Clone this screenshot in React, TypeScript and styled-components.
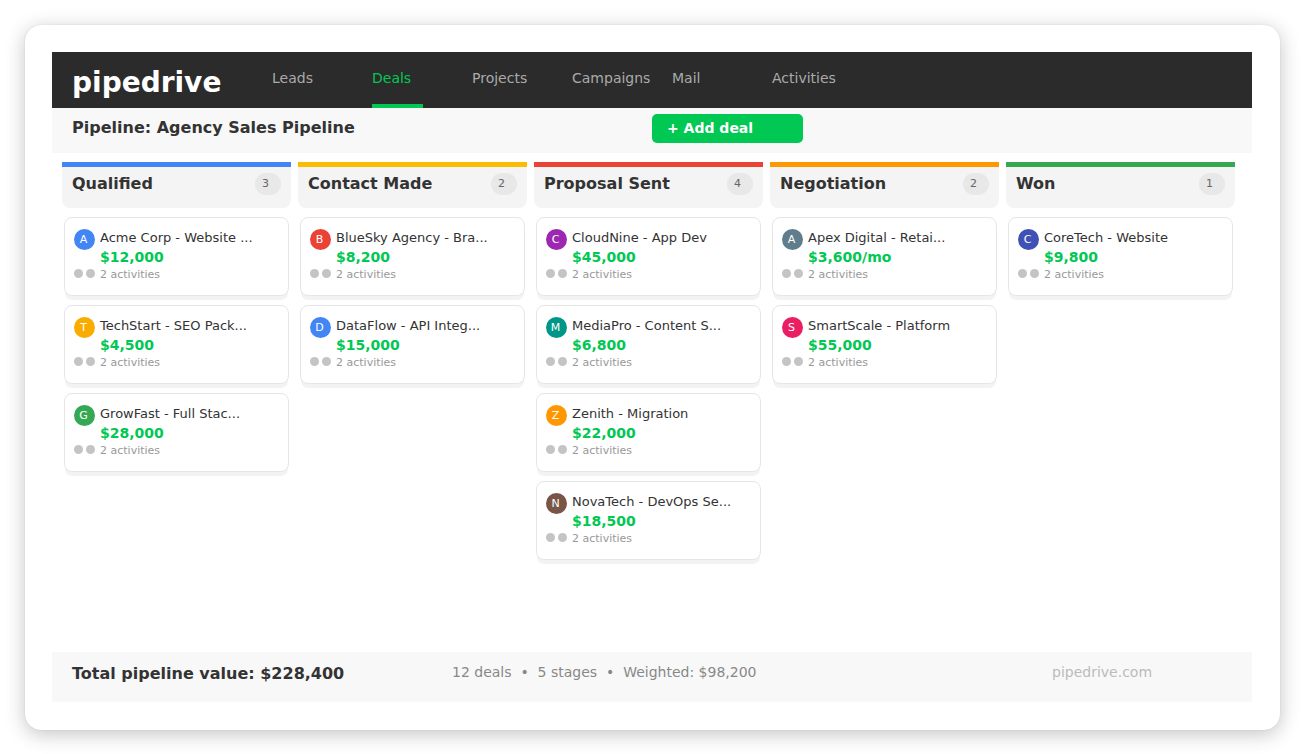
import styled, { createGlobalStyle } from "styled-components";

const GlobalStyle = createGlobalStyle`
  html, body {
    margin: 0;
    padding: 0;
    background: #fff;
  }
  body {
    font-family: "DejaVu Sans", sans-serif;
    width: 1304px;
    height: 754px;
    overflow: hidden;
  }
`;

const Frame = styled.div`
  box-sizing: border-box;
  width: 1255px;
  height: 705px;
  margin: 25px 0 0 25px;
  padding: 27px 28px 28px 27px;
  background: #fff;
  border-radius: 16px;
  box-shadow: 0 4px 20px rgba(0, 0, 0, 0.24), 0 0 1px rgba(0, 0, 0, 0.2);
  display: flex;
  flex-direction: column;
`;

const NavBar = styled.nav`
  height: 56px;
  background: #2b2b2b;
  display: flex;
  padding-left: 20px;
`;

const Logo = styled.div`
  width: 200px;
  padding-top: 14px;
  font-size: 28px;
  font-weight: 700;
  line-height: 33px;
  color: #fff;
`;

const NavItem = styled.div`
  width: 100px;
`;

const NavLabel = styled.div<{ $active?: boolean }>`
  box-sizing: border-box;
  width: 51px;
  height: 56px;
  padding-top: 18px;
  font-size: 14px;
  line-height: 17px;
  white-space: nowrap;
  color: ${(p) => (p.$active ? "#00c853" : "#aaaaaa")};
  border-bottom: 4px solid ${(p) => (p.$active ? "#00c853" : "transparent")};
`;

const Toolbar = styled.div`
  height: 45px;
  background: #f8f8f8;
  display: grid;
  grid-template-columns: 580px auto;
  padding-left: 20px;
`;

const PipelineTitle = styled.div`
  padding-top: 10px;
  font-size: 16px;
  line-height: 19px;
  font-weight: 700;
  color: #333;
`;

const AddButton = styled.button`
  box-sizing: border-box;
  width: 151px;
  height: 29px;
  margin-top: 6px;
  padding: 0 0 2px 15px;
  border: none;
  border-radius: 5px;
  background: #00c853;
  color: #fff;
  font-family: inherit;
  font-size: 14px;
  font-weight: 700;
  text-align: left;
`;

const Board = styled.div`
  flex: 1;
  display: flex;
  gap: 7px;
  padding: 9px 0 0 10px;
`;

const Column = styled.section`
  width: 229px;
`;

const ColumnHeader = styled.header<{ $color: string }>`
  box-sizing: border-box;
  height: 46px;
  padding: 6px 10px 0;
  background: #f4f4f4;
  border-top: 5px solid ${(p) => p.$color};
  border-radius: 0 0 8px 8px;
  display: flex;
  justify-content: space-between;
  align-items: flex-start;
`;

const ColumnTitle = styled.h2`
  margin: 1px 0 0;
  font-size: 16px;
  line-height: 20px;
  font-weight: 700;
  color: #333;
`;

const CountBadge = styled.span`
  box-sizing: border-box;
  width: 26px;
  height: 22px;
  padding-left: 7px;
  border-radius: 11px;
  background: #e8e8e8;
  font-size: 11px;
  line-height: 21px;
  color: #666;
`;

const CardList = styled.div`
  display: flex;
  flex-direction: column;
  gap: 9px;
  padding: 9px 2px 0;
`;

const Card = styled.article`
  box-sizing: border-box;
  height: 79px;
  padding: 11px 9px 0;
  background: #fff;
  border: 1px solid #e6e6e6;
  border-radius: 8px;
  box-shadow: 0 5px 0 -1px #f3f3f3;
  display: grid;
  grid-template-columns: 26px 1fr;
  grid-template-rows: 18px 20px 16px;
`;

const Avatar = styled.div<{ $color: string }>`
  box-sizing: border-box;
  grid-row: 1 / span 2;
  width: 21px;
  height: 21px;
  padding-right: 2px;
  border-radius: 50%;
  background: ${(p) => p.$color};
  color: #fff;
  font-size: 11px;
  line-height: 21px;
  text-align: center;
`;

const DealName = styled.div`
  font-size: 13px;
  line-height: 18px;
  color: #333;
  white-space: nowrap;
`;

const Amount = styled.div`
  grid-column: 2;
  font-size: 14px;
  font-weight: 700;
  line-height: 20px;
  color: #00c853;
`;

const Dots = styled.div`
  display: flex;
  gap: 3px;
  padding-top: 2px;
`;

const Dot = styled.span`
  width: 9px;
  height: 9px;
  border-radius: 50%;
  background: #c4c4c4;
`;

const ActivityText = styled.div`
  font-size: 11px;
  line-height: 16px;
  color: #999;
`;

const Footer = styled.footer`
  height: 50px;
  background: #f8f8f8;
  display: grid;
  grid-template-columns: 380px 600px auto;
  padding-left: 20px;
`;

const TotalValue = styled.div`
  padding-top: 12px;
  font-size: 16px;
  line-height: 19px;
  font-weight: 700;
  color: #333;
`;

const Stats = styled.div`
  padding-top: 12px;
  font-size: 14px;
  line-height: 17px;
  color: #888;
  white-space: pre;
`;

const Domain = styled(Stats)`
  color: #bbb;
`;

const navItems = ["Leads", "Deals", "Projects", "Campaigns", "Mail", "Activities"];

const stages = [
  {
    name: "Qualified",
    color: "#4285f4",
    deals: [
      { name: "Acme Corp - Website ...", amount: "$12,000", initial: "A", color: "#4285f4" },
      { name: "TechStart - SEO Pack...", amount: "$4,500", initial: "T", color: "#f9ab00" },
      { name: "GrowFast - Full Stac...", amount: "$28,000", initial: "G", color: "#34a853" },
    ],
  },
  {
    name: "Contact Made",
    color: "#fbbc04",
    deals: [
      { name: "BlueSky Agency - Bra...", amount: "$8,200", initial: "B", color: "#ea4335" },
      { name: "DataFlow - API Integ...", amount: "$15,000", initial: "D", color: "#4285f4" },
    ],
  },
  {
    name: "Proposal Sent",
    color: "#ea4335",
    deals: [
      { name: "CloudNine - App Dev", amount: "$45,000", initial: "C", color: "#9c27b0" },
      { name: "MediaPro - Content S...", amount: "$6,800", initial: "M", color: "#009688" },
      { name: "Zenith - Migration", amount: "$22,000", initial: "Z", color: "#ff9800" },
      { name: "NovaTech - DevOps Se...", amount: "$18,500", initial: "N", color: "#795548" },
    ],
  },
  {
    name: "Negotiation",
    color: "#ff9800",
    deals: [
      { name: "Apex Digital - Retai...", amount: "$3,600/mo", initial: "A", color: "#607d8b" },
      { name: "SmartScale - Platform", amount: "$55,000", initial: "S", color: "#e91e63" },
    ],
  },
  {
    name: "Won",
    color: "#34a853",
    deals: [{ name: "CoreTech - Website", amount: "$9,800", initial: "C", color: "#3f51b5" }],
  },
];

const App = () => {
  return (
    <>
      <GlobalStyle />
      <Frame>
        <NavBar>
          <Logo>pipedrive</Logo>
          {navItems.map((item) => (
            <NavItem key={item}>
              <NavLabel $active={item === "Deals"}>{item}</NavLabel>
            </NavItem>
          ))}
        </NavBar>
        <Toolbar>
          <PipelineTitle>Pipeline: Agency Sales Pipeline</PipelineTitle>
          <AddButton>+ Add deal</AddButton>
        </Toolbar>
        <Board>
          {stages.map((stage) => (
            <Column key={stage.name}>
              <ColumnHeader $color={stage.color}>
                <ColumnTitle>{stage.name}</ColumnTitle>
                <CountBadge>{stage.deals.length}</CountBadge>
              </ColumnHeader>
              <CardList>
                {stage.deals.map((deal) => (
                  <Card key={deal.name}>
                    <Avatar $color={deal.color}>{deal.initial}</Avatar>
                    <DealName>{deal.name}</DealName>
                    <Amount>{deal.amount}</Amount>
                    <Dots>
                      <Dot />
                      <Dot />
                    </Dots>
                    <ActivityText>2 activities</ActivityText>
                  </Card>
                ))}
              </CardList>
            </Column>
          ))}
        </Board>
        <Footer>
          <TotalValue>Total pipeline value: $228,400</TotalValue>
          <Stats>{"12 deals  •  5 stages  •  Weighted: $98,200"}</Stats>
          <Domain>pipedrive.com</Domain>
        </Footer>
      </Frame>
    </>
  );
};

export default App;
